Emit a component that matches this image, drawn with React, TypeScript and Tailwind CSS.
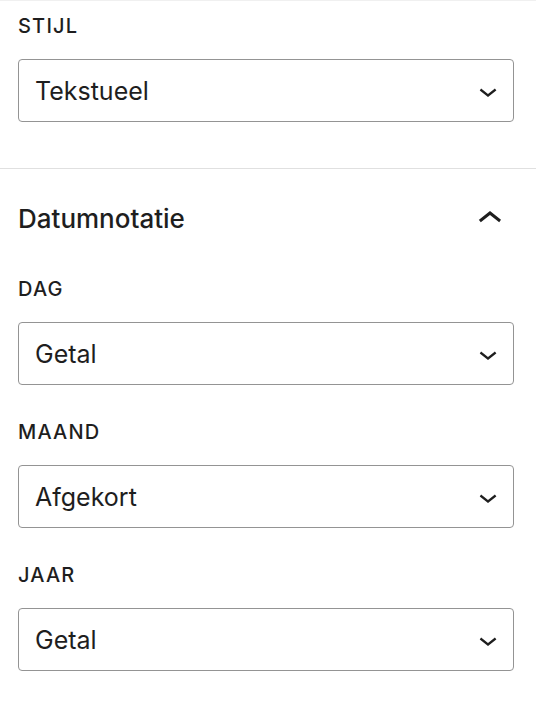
const FONT = { fontFamily: 'Inter, "Noto Sans", sans-serif' }

function ChevronDown() {
  return (
    <svg viewBox="0 0 24 24" className="h-[36px] w-[36px] fill-[#1e1e1e]" aria-hidden>
      <path d="M17.5 11.6L12 16l-5.5-4.4.9-1.2L12 14l4.6-3.6 1 1.2z" />
    </svg>
  )
}

function ChevronUp() {
  return (
    <svg viewBox="0 0 24 24" className="h-[48px] w-[48px] fill-[#1e1e1e]" aria-hidden>
      <path d="M6.5 12.4L12 8l5.5 4.4-.9 1.2L12 10l-4.6 3.6-1-1.2z" />
    </svg>
  )
}

function SelectField({ label, value }: { label: string; value: string }) {
  return (
    <div className="flex flex-col gap-[21px]">
      <span className="text-[20px] font-medium uppercase leading-[24px] tracking-[1.2px] text-[#1e1e1e]">
        {label}
      </span>
      <div className="flex h-[63px] items-center justify-between rounded-[4px] border border-[#949494] bg-white pl-[16px] pr-[7px]">
        <span className="text-[25px] leading-[32px] text-[#1e1e1e]">{value}</span>
        <ChevronDown />
      </div>
    </div>
  )
}

export default function App() {
  return (
    <div className="h-[708px] w-[536px] overflow-hidden bg-white" style={FONT}>
      <section className="border-t border-[#f0f0f0] pb-[46px] pl-[18px] pr-[22px] pt-[13px]">
        <SelectField label="Stijl" value="Tekstueel" />
      </section>
      <section className="border-t border-[#e0e0e0] pl-[18px] pr-[22px] pt-[34px]">
        <div className="flex h-[32px] items-center justify-between">
          <h2 className="text-[26px] font-medium leading-[32px] text-[#1e1e1e]">Datumnotatie</h2>
          <ChevronUp />
        </div>
        <div className="mt-[42px] flex flex-col gap-[35px]">
          <SelectField label="Dag" value="Getal" />
          <SelectField label="Maand" value="Afgekort" />
          <SelectField label="Jaar" value="Getal" />
        </div>
      </section>
    </div>
  )
}
